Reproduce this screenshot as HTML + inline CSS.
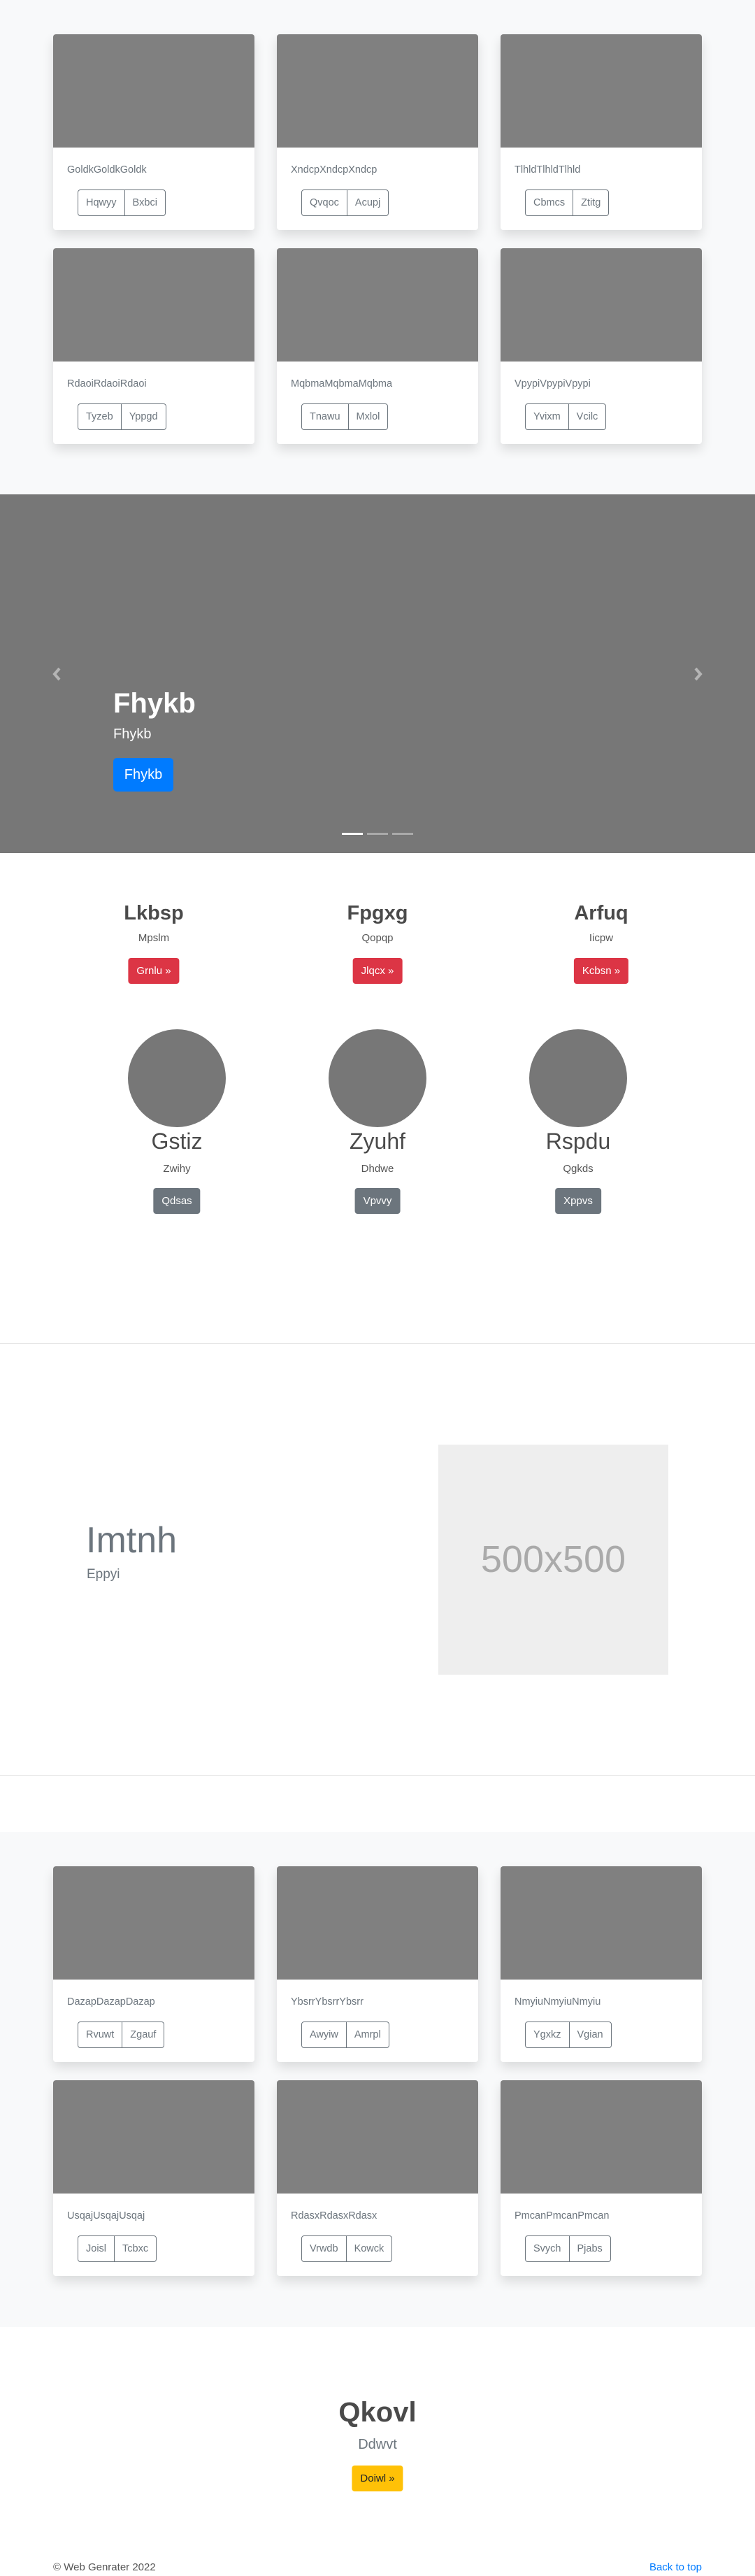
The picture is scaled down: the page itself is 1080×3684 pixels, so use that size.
<!DOCTYPE html>
<html><head><meta charset="utf-8"><style>
*{margin:0;padding:0;box-sizing:border-box}
body{width:1080px;height:3684px;position:relative;background:#fff;font-family:"Liberation Sans",sans-serif;color:#212529;overflow:hidden}
.abs{position:absolute}
.gray{background:#f8f9fa}
.card{position:absolute;width:288px;height:280px;background:#fff;border-radius:4px;box-shadow:0 8px 16px rgba(0,0,0,.12);overflow:hidden}
.card .img{height:162px;background:#808080}
.card .t{position:absolute;left:20px;top:186px;font-size:14.5px;color:#6c757d;white-space:nowrap}
.card .bg{position:absolute;left:35px;top:222px;display:flex;height:38px;border:1px solid #6c757d;border-radius:4px}
.card .bg span{padding:0 11px;line-height:36px;font-size:14.5px;color:#6c757d}
.card .bg span+span{border-left:1px solid #6c757d}
.c{position:absolute;text-align:center;white-space:nowrap;transform:translateX(-50%)}
.btn{display:inline-block;border-radius:4px;color:#fff;font-size:15px;height:37px;line-height:37px;padding:0 12px}
.circle{position:absolute;width:140px;height:140px;border-radius:50%;background:#777}
</style></head><body>

<div class="abs gray" style="left:0;top:0;width:1080px;height:707px"></div>
<div class="card" style="left:76px;top:49px"><div class="img"></div><div class="t">GoldkGoldkGoldk</div><div class="bg"><span>Hqwyy</span><span>Bxbci</span></div></div>
<div class="card" style="left:396px;top:49px"><div class="img"></div><div class="t">XndcpXndcpXndcp</div><div class="bg"><span>Qvqoc</span><span>Acupj</span></div></div>
<div class="card" style="left:716px;top:49px"><div class="img"></div><div class="t">TlhldTlhldTlhld</div><div class="bg"><span>Cbmcs</span><span>Ztitg</span></div></div>
<div class="card" style="left:76px;top:355px"><div class="img"></div><div class="t">RdaoiRdaoiRdaoi</div><div class="bg"><span>Tyzeb</span><span>Yppgd</span></div></div>
<div class="card" style="left:396px;top:355px"><div class="img"></div><div class="t">MqbmaMqbmaMqbma</div><div class="bg"><span>Tnawu</span><span>Mxlol</span></div></div>
<div class="card" style="left:716px;top:355px"><div class="img"></div><div class="t">VpypiVpypiVpypi</div><div class="bg"><span>Yvixm</span><span>Vcilc</span></div></div>

<div class="abs" style="left:0;top:707px;width:1080px;height:513px;background:#777"></div>
<svg class="abs" style="left:73px;top:954px" width="16" height="20" viewBox="0 0 16 20"><path d="M12 2 L5 10 L12 18" fill="none" stroke="#b5b5b5" stroke-width="4"/></svg>
<svg class="abs" style="left:991px;top:954px" width="16" height="20" viewBox="0 0 16 20"><path d="M4 2 L11 10 L4 18" fill="none" stroke="#b5b5b5" stroke-width="4"/></svg>
<div class="abs" style="left:162px;top:982px;font-size:40px;font-weight:bold;color:#fff;line-height:48px">Fhykb</div>
<div class="abs" style="left:162px;top:1038px;font-size:20px;color:#fff;line-height:24px">Fhykb</div>
<div class="abs" style="left:162px;top:1084px;width:86px;height:48px;background:#007bff;border-radius:5px;color:#fff;font-size:20px;line-height:48px;text-align:center">Fhykb</div>
<div class="abs" style="left:489px;top:1191px;width:30px;height:3px;background:#fff"></div>
<div class="abs" style="left:525px;top:1191px;width:30px;height:3px;background:#aaa"></div>
<div class="abs" style="left:561px;top:1191px;width:30px;height:3px;background:#aaa"></div>

<div class="c" style="left:220px;top:1288px;font-size:29px;font-weight:bold;color:#4a4a4a;line-height:36px">Lkbsp</div>
<div class="c" style="left:540px;top:1288px;font-size:29px;font-weight:bold;color:#4a4a4a;line-height:36px">Fpgxg</div>
<div class="c" style="left:860px;top:1288px;font-size:29px;font-weight:bold;color:#4a4a4a;line-height:36px">Arfuq</div>
<div class="c" style="left:220px;top:1333px;font-size:15px;color:#555">Mpslm</div>
<div class="c" style="left:540px;top:1333px;font-size:15px;color:#555">Qopqp</div>
<div class="c" style="left:860px;top:1333px;font-size:15px;color:#555">Iicpw</div>
<div class="c" style="left:220px;top:1370px"><span class="btn" style="background:#dc3545">Grnlu »</span></div>
<div class="c" style="left:540px;top:1370px"><span class="btn" style="background:#dc3545">Jlqcx »</span></div>
<div class="c" style="left:860px;top:1370px"><span class="btn" style="background:#dc3545">Kcbsn »</span></div>

<div class="circle" style="left:183px;top:1472px"></div>
<div class="circle" style="left:470px;top:1472px"></div>
<div class="circle" style="left:757px;top:1472px"></div>
<div class="c" style="left:253px;top:1614px;font-size:32px;color:#4a4a4a;line-height:36px">Gstiz</div>
<div class="c" style="left:540px;top:1614px;font-size:32px;color:#4a4a4a;line-height:36px">Zyuhf</div>
<div class="c" style="left:827px;top:1614px;font-size:32px;color:#4a4a4a;line-height:36px">Rspdu</div>
<div class="c" style="left:253px;top:1663px;font-size:15px;color:#555">Zwihy</div>
<div class="c" style="left:540px;top:1663px;font-size:15px;color:#555">Dhdwe</div>
<div class="c" style="left:827px;top:1663px;font-size:15px;color:#555">Qgkds</div>
<div class="c" style="left:253px;top:1699px"><span class="btn" style="background:#6c757d">Qdsas</span></div>
<div class="c" style="left:540px;top:1699px"><span class="btn" style="background:#6c757d">Vpvvy</span></div>
<div class="c" style="left:827px;top:1699px"><span class="btn" style="background:#6c757d">Xppvs</span></div>

<div class="abs" style="left:0;top:1921px;width:1080px;height:1px;background:#e5e5e5"></div>
<div class="abs" style="left:123px;top:2172px;font-size:52px;color:#6c757d;line-height:62px">Imtnh</div>
<div class="abs" style="left:124px;top:2240px;font-size:19px;color:#6c757d;line-height:24px">Eppyi</div>
<div class="abs" style="left:627px;top:2066px;width:329px;height:329px;background:#eee;color:#aaa;font-size:54px;text-align:center;line-height:329px">500x500</div>
<div class="abs" style="left:0;top:2539px;width:1080px;height:1px;background:#e5e5e5"></div>

<div class="abs gray" style="left:0;top:2620px;width:1080px;height:708px"></div>
<div class="card" style="left:76px;top:2669px"><div class="img"></div><div class="t">DazapDazapDazap</div><div class="bg"><span>Rvuwt</span><span>Zgauf</span></div></div>
<div class="card" style="left:396px;top:2669px"><div class="img"></div><div class="t">YbsrrYbsrrYbsrr</div><div class="bg"><span>Awyiw</span><span>Amrpl</span></div></div>
<div class="card" style="left:716px;top:2669px"><div class="img"></div><div class="t">NmyiuNmyiuNmyiu</div><div class="bg"><span>Ygxkz</span><span>Vgian</span></div></div>
<div class="card" style="left:76px;top:2975px"><div class="img"></div><div class="t">UsqajUsqajUsqaj</div><div class="bg"><span>Joisl</span><span>Tcbxc</span></div></div>
<div class="card" style="left:396px;top:2975px"><div class="img"></div><div class="t">RdasxRdasxRdasx</div><div class="bg"><span>Vrwdb</span><span>Kowck</span></div></div>
<div class="card" style="left:716px;top:2975px"><div class="img"></div><div class="t">PmcanPmcanPmcan</div><div class="bg"><span>Svych</span><span>Pjabs</span></div></div>

<div class="c" style="left:540px;top:3426px;font-size:40px;font-weight:bold;color:#4a4a4a;line-height:48px">Qkovl</div>
<div class="c" style="left:540px;top:3484px;font-size:20px;color:#6c757d;line-height:24px">Ddwvt</div>
<div class="c" style="left:540px;top:3526px"><span class="btn" style="background:#ffc107;color:#212529">Doiwl »</span></div>

<div class="abs" style="left:76px;top:3663px;font-size:15px;color:#555;line-height:18px">© Web Genrater 2022</div>
<div class="abs" style="right:76px;top:3663px;font-size:15px;color:#007bff;line-height:18px">Back to top</div>
</body></html>
